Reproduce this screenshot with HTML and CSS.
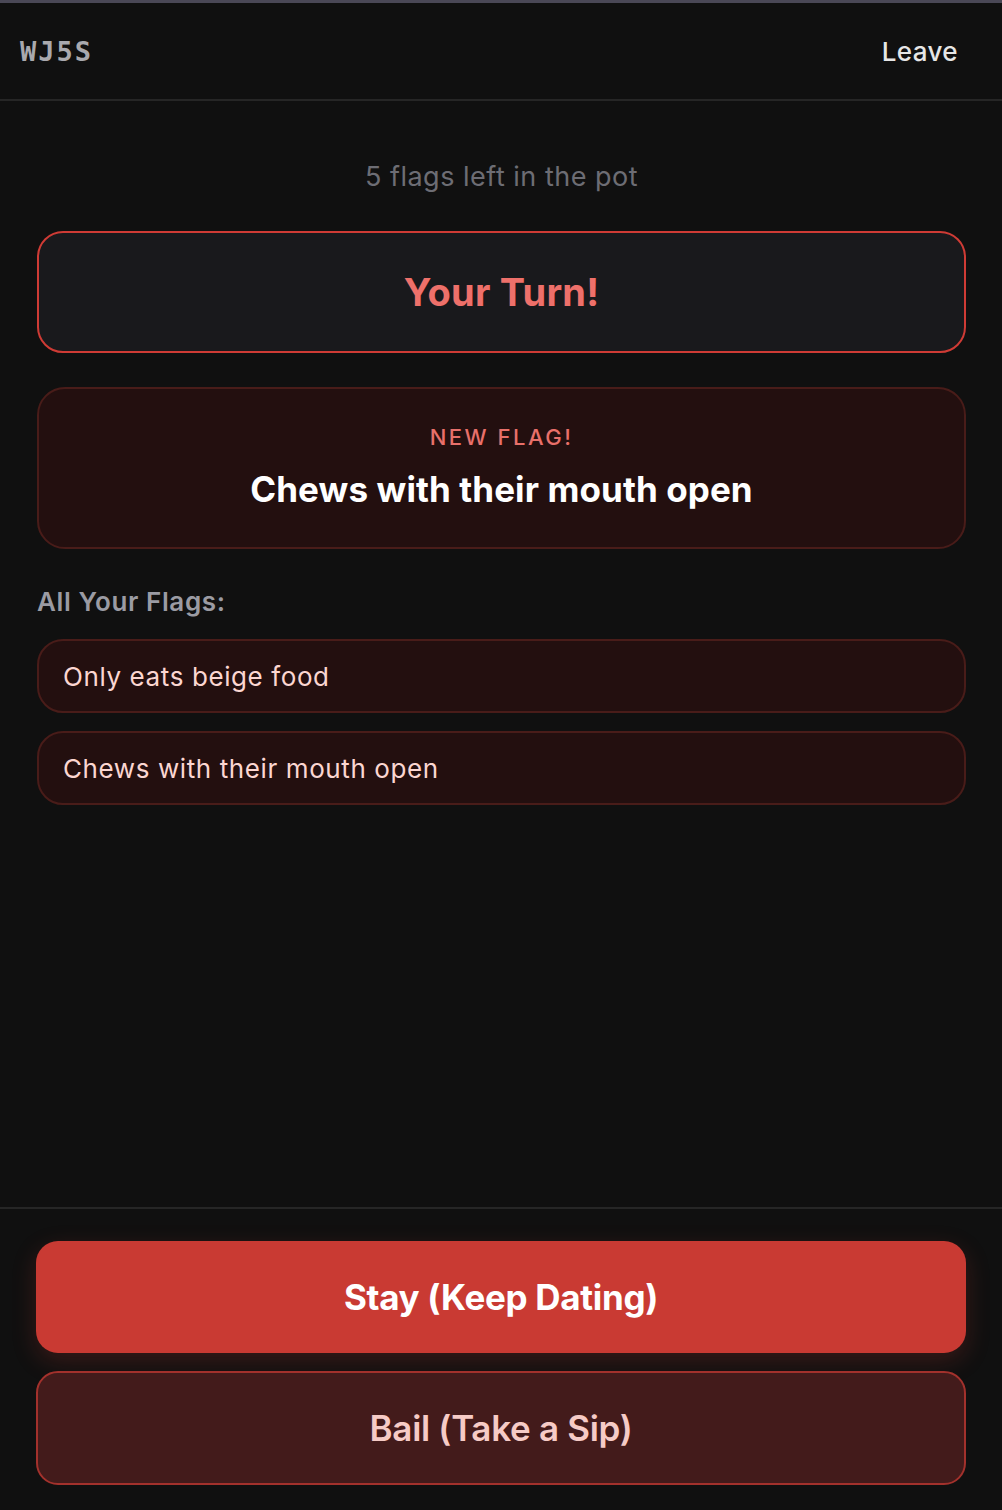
FILE: index.html
```html
<!DOCTYPE html>
<html lang="en">
<head>
  <meta charset="UTF-8" />
  <meta name="viewport" content="width=device-width, initial-scale=1.0"/>
  <title>Red Flags</title>
  <link rel="stylesheet" href="styles.css">
</head>
<body>
  <div class="app">
    <header class="topbar">
      <span class="room-code">WJ5S</span>
      <button class="leave">Leave</button>
    </header>

    <main class="board">
      <p class="pot">5 flags left in the pot</p>

      <div class="turn">Your Turn!</div>

      <section class="new-flag">
        <div class="new-flag-label">NEW FLAG!</div>
        <div class="new-flag-text">Chews with their mouth open</div>
      </section>

      <h2 class="flags-title">All Your Flags:</h2>
      <ul class="flags">
        <li class="flag">Only eats beige food</li>
        <li class="flag">Chews with their mouth open</li>
      </ul>
    </main>

    <footer class="actions">
      <button class="btn btn-stay">Stay (Keep Dating)</button>
      <button class="btn btn-bail">Bail (Take a Sip)</button>
    </footer>
  </div>
</body>
</html>
```

FILE: styles.css
```css
* { margin: 0; padding: 0; box-sizing: border-box; }
body {
  background: #101010;
  color: white;
  font-family: 'Inter', 'Roboto', sans-serif;
  overflow: hidden;
}
button {
  font-family: inherit;
  border: none;
  background: none;
  cursor: pointer;
}
.app {
  height: 1510px;
  display: flex;
  flex-direction: column;
  border-top: 3px solid #4a4856;
  border-radius: 0 0 28px 28px;
  overflow: hidden;
}
.topbar {
  height: 98px;
  flex-shrink: 0;
  display: flex;
  align-items: center;
  justify-content: space-between;
  padding: 0 44px 0 20px;
  border-bottom: 2px solid #262626;
}
.room-code {
  font-family: 'DejaVu Sans Mono', 'Liberation Mono', monospace;
  font-weight: bold;
  font-size: 27px;
  letter-spacing: 2px;
  color: #a9a9ae;
}
.leave {
  font-size: 26px;
  font-weight: 500;
  letter-spacing: 0.4px;
  color: #e6e6e6;
}
.board {
  flex: 1;
  padding: 60px 36px 0 37px;
  display: flex;
  flex-direction: column;
}
.pot {
  text-align: center;
  font-size: 27px;
  line-height: 32px;
  letter-spacing: 0.5px;
  color: #6d6d74;
  margin-bottom: 38px;
}
.turn {
  height: 122px;
  display: flex;
  align-items: center;
  justify-content: center;
  background: #19191c;
  border: 2px solid #cf3b35;
  border-radius: 26px;
  font-size: 38px;
  font-weight: 700;
  letter-spacing: 0.2px;
  color: #ee706a;
  margin-bottom: 34px;
}
.new-flag {
  height: 162px;
  background: #230f0f;
  border: 2px solid #491c19;
  border-radius: 28px;
  padding-top: 34px;
  text-align: center;
  margin-bottom: 37px;
}
.new-flag-label {
  font-size: 22px;
  line-height: 28px;
  font-weight: 500;
  letter-spacing: 2.5px;
  color: #e8706a;
  margin-bottom: 17px;
}
.new-flag-text {
  font-size: 35px;
  line-height: 42px;
  font-weight: 700;
  letter-spacing: 0.1px;
  color: #ffffff;
}
.flags-title {
  font-size: 26px;
  line-height: 32px;
  font-weight: 600;
  letter-spacing: 0.6px;
  color: #9b9ba3;
  margin-bottom: 21px;
}
.flags {
  list-style: none;
  display: flex;
  flex-direction: column;
  gap: 18px;
}
.flag {
  height: 74px;
  display: flex;
  align-items: center;
  padding: 0 24px;
  background: #230f0f;
  border: 2px solid #491c19;
  border-radius: 26px;
  font-size: 26px;
  letter-spacing: 0.6px;
  color: #fbd6d1;
}
.actions {
  flex-shrink: 0;
  border-top: 2px solid #262626;
  padding: 32px 36px 25px;
  display: flex;
  flex-direction: column;
  gap: 18px;
}
.btn {
  width: 100%;
  border-radius: 22px;
  font-size: 35px;
  letter-spacing: -0.3px;
}
.btn-stay {
  height: 112px;
  background: #c93a33;
  color: #ffffff;
  font-weight: 700;
  box-shadow: 0 8px 24px rgba(201, 58, 51, 0.22);
}
.btn-bail {
  height: 114px;
  background: #431b1b;
  border: 2px solid #a3312c;
  color: #f6cbc6;
  font-weight: 600;
}
```
